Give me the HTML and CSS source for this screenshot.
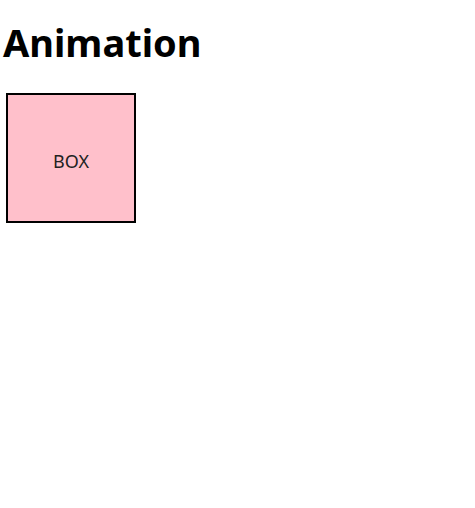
FILE: index.html
```html
<!DOCTYPE html>
<html>
<head>
<meta charset="utf-8">
<link rel="stylesheet" href="styles.css">
</head>
<body>
<div class="page">
  <h1 class="title">Animation</h1>
  <div class="box">BOX</div>
</div>
</body>
</html>
```

FILE: styles.css
```css
html, body {
  margin: 0;
  padding: 0;
  background: #fff;
}
.page {
  padding: 0 0 0 3px;
  font-family: "Noto Sans", "Open Sans", sans-serif;
  color: #000;
}
.title {
  margin: 0;
  padding-top: 14px;
  font-size: 38px;
  font-weight: 700;
  line-height: 56px;
  height: 56px;
}
.box {
  margin: 23px 0 0 3px;
  width: 126px;
  height: 121px;
  padding-top: 5px;
  border: 2px solid #000;
  background: #ffc0cb;
  display: flex;
  align-items: center;
  justify-content: center;
  font-size: 18px;
  color: #222;
}
```
